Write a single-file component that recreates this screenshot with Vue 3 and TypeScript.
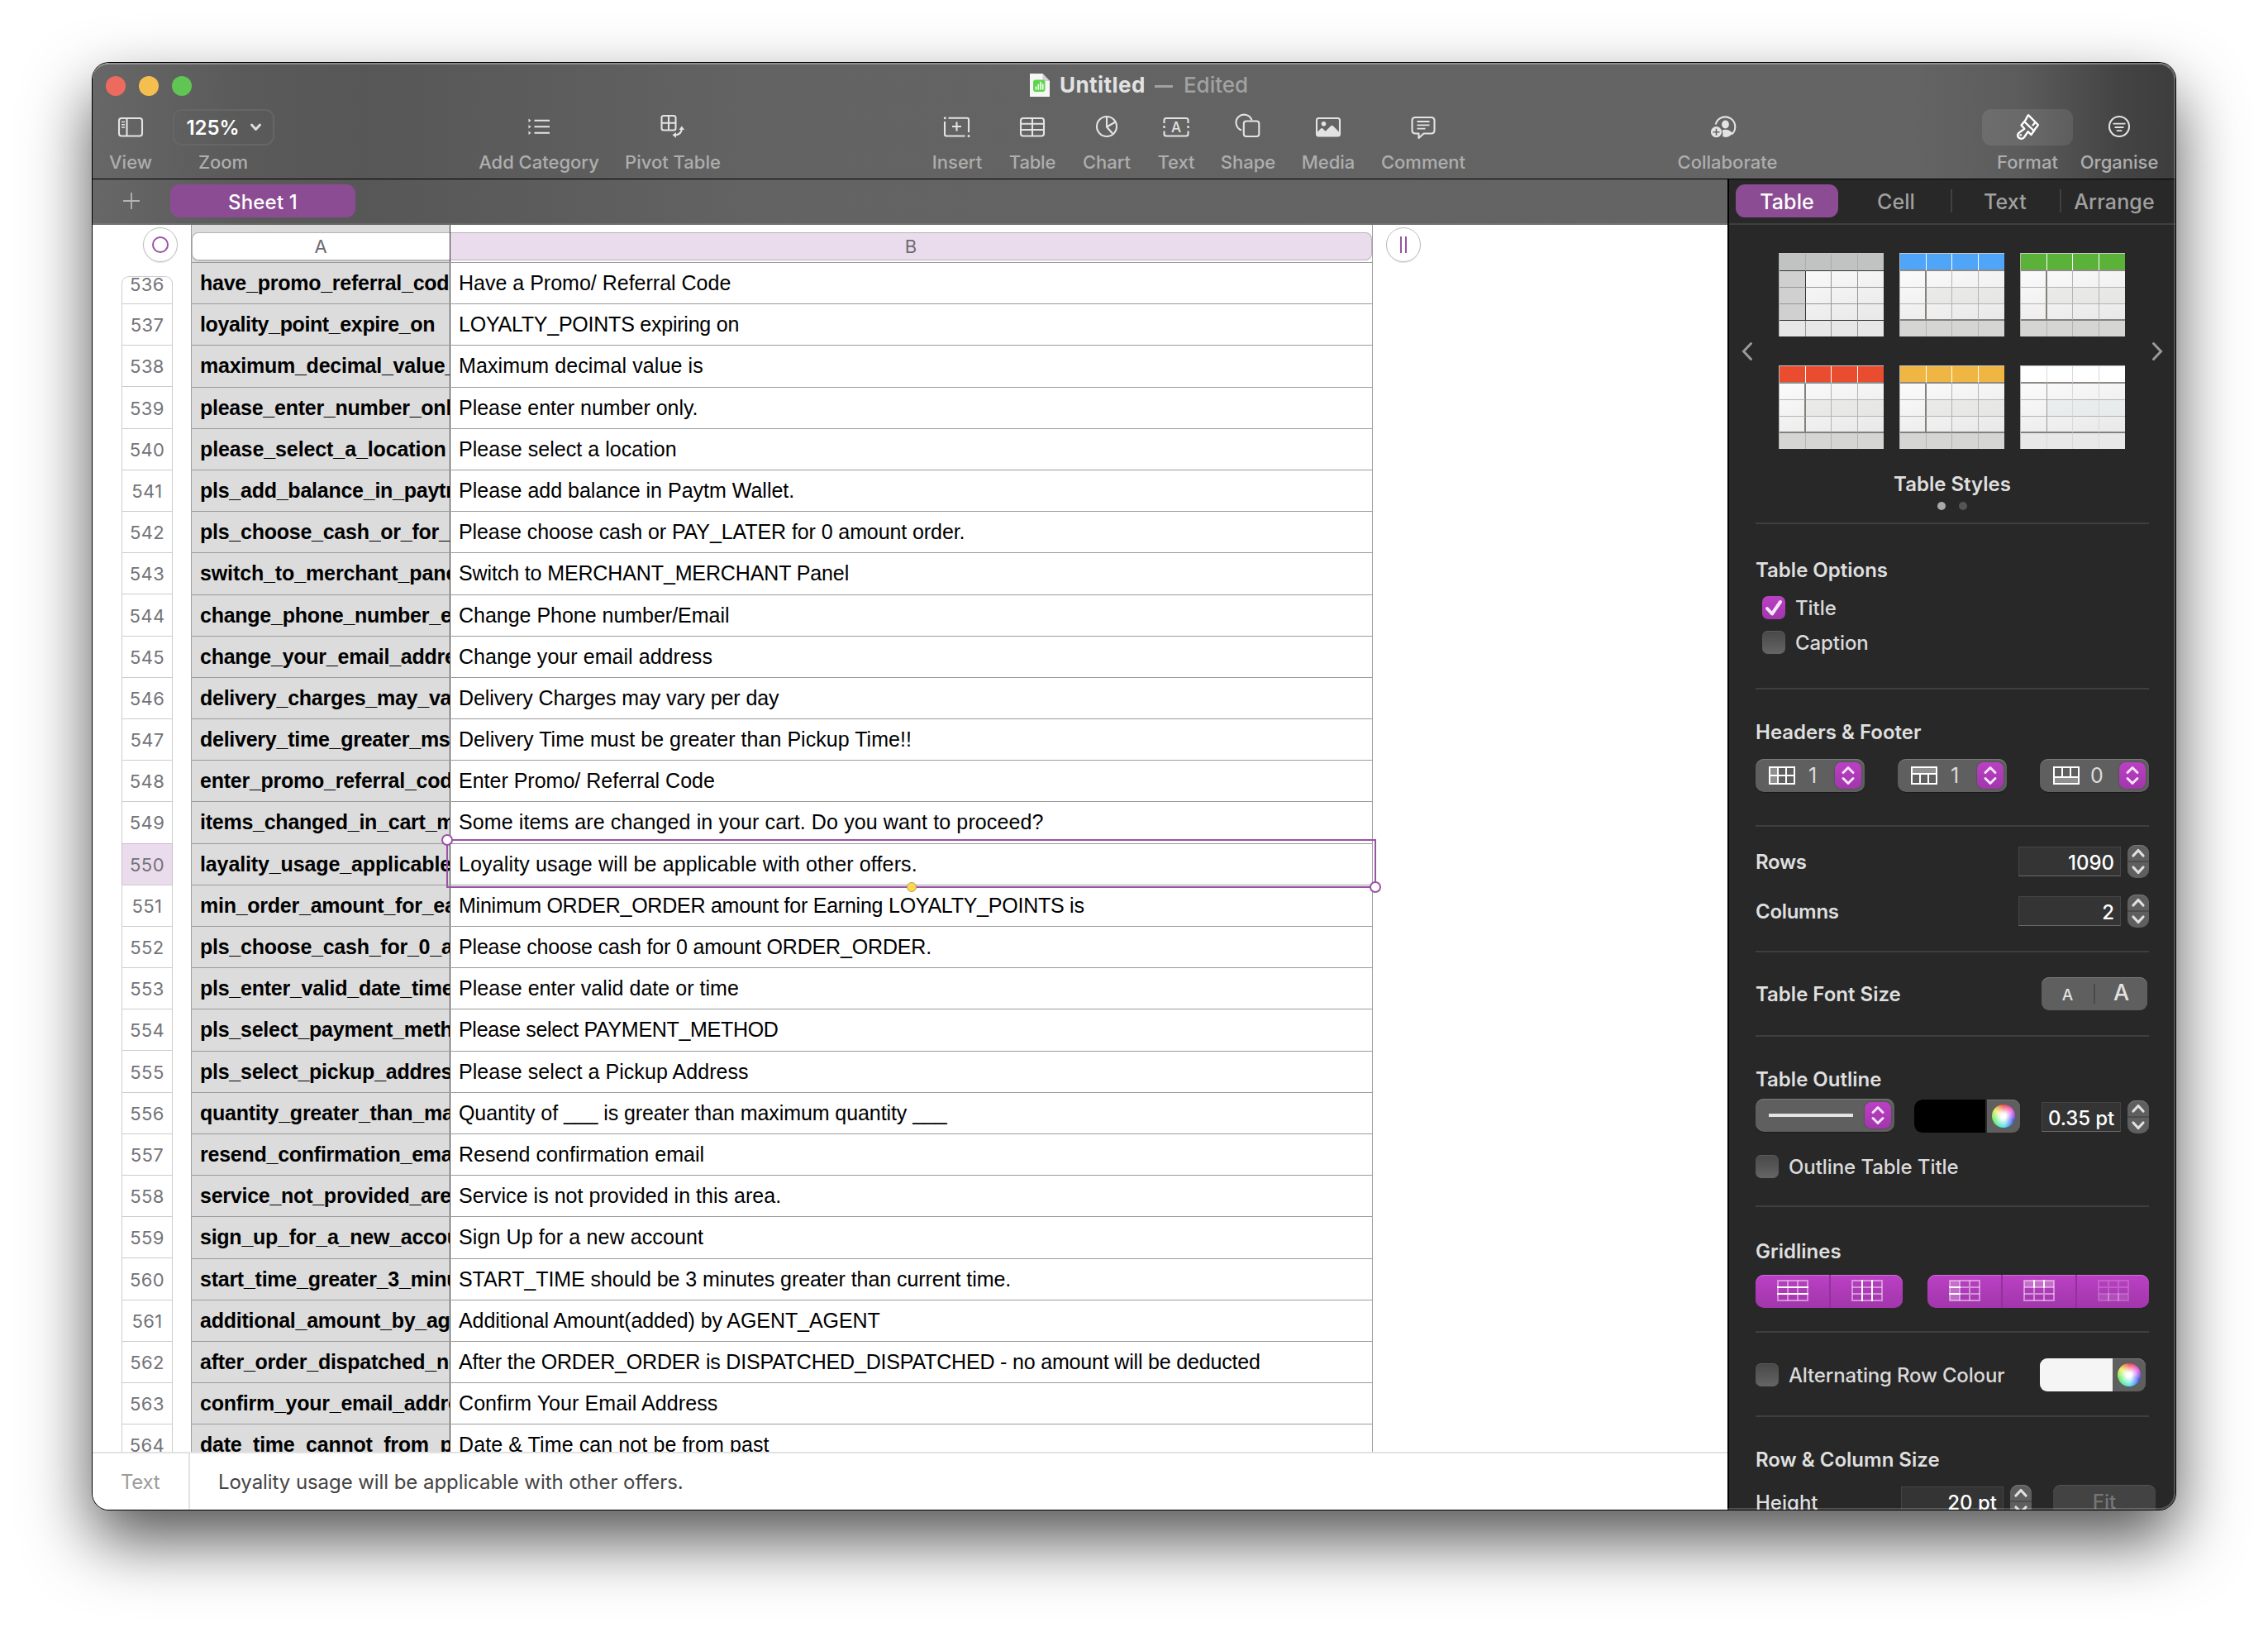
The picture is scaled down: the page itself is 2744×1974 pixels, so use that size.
<script setup lang="ts">
interface Row { n: number; key: string; text: string; ls: number; kls?: number }

const rows: Row[] = [
  { n: 536, key: 'have_promo_referral_code', text: 'Have a Promo/ Referral Code', ls: 0 },
  { n: 537, key: 'loyality_point_expire_on', text: 'LOYALTY_POINTS expiring on', ls: -0.23, kls: -0.38 },
  { n: 538, key: 'maximum_decimal_value_is', text: 'Maximum decimal value is', ls: 0.11 },
  { n: 539, key: 'please_enter_number_only', text: 'Please enter number only.', ls: -0.02 },
  { n: 540, key: 'please_select_a_location', text: 'Please select a location', ls: 0.04, kls: -0.1 },
  { n: 541, key: 'pls_add_balance_in_paytm', text: 'Please add balance in Paytm Wallet.', ls: 0 },
  { n: 542, key: 'pls_choose_cash_or_for_0_amount', text: 'Please choose cash or PAY_LATER for 0 amount order.', ls: -0.09 },
  { n: 543, key: 'switch_to_merchant_panel', text: 'Switch to MERCHANT_MERCHANT Panel', ls: -0.12, kls: -0.12 },
  { n: 544, key: 'change_phone_number_email', text: 'Change Phone number/Email', ls: -0.02 },
  { n: 545, key: 'change_your_email_address', text: 'Change your email address', ls: 0.05 },
  { n: 546, key: 'delivery_charges_may_vary', text: 'Delivery Charges may vary per day', ls: -0.09 },
  { n: 547, key: 'delivery_time_greater_msg', text: 'Delivery Time must be greater than Pickup Time!!', ls: 0.04 },
  { n: 548, key: 'enter_promo_referral_code', text: 'Enter Promo/ Referral Code', ls: 0 },
  { n: 549, key: 'items_changed_in_cart_msg', text: 'Some items are changed in your cart. Do you want to proceed?', ls: 0.12 },
  { n: 550, key: 'layality_usage_applicable_msg', text: 'Loyality usage will be applicable with other offers.', ls: 0.15, kls: -0.12 },
  { n: 551, key: 'min_order_amount_for_earning', text: 'Minimum ORDER_ORDER amount for Earning LOYALTY_POINTS is', ls: -0.24 },
  { n: 552, key: 'pls_choose_cash_for_0_amount', text: 'Please choose cash for 0 amount ORDER_ORDER.', ls: -0.17 },
  { n: 553, key: 'pls_enter_valid_date_time', text: 'Please enter valid date or time', ls: 0.04 },
  { n: 554, key: 'pls_select_payment_method', text: 'Please select PAYMENT_METHOD', ls: -0.3 },
  { n: 555, key: 'pls_select_pickup_address', text: 'Please select a Pickup Address', ls: 0.06 },
  { n: 556, key: 'quantity_greater_than_max', text: 'Quantity of ___ is greater than maximum quantity ___', ls: -0.08 },
  { n: 557, key: 'resend_confirmation_email', text: 'Resend confirmation email', ls: 0.05 },
  { n: 558, key: 'service_not_provided_area', text: 'Service is not provided in this area.', ls: 0.03 },
  { n: 559, key: 'sign_up_for_a_new_account', text: 'Sign Up for a new account', ls: 0.11 },
  { n: 560, key: 'start_time_greater_3_minutes', text: 'START_TIME should be 3 minutes greater than current time.', ls: -0.06 },
  { n: 561, key: 'additional_amount_by_agent', text: 'Additional Amount(added) by AGENT_AGENT', ls: -0.08 },
  { n: 562, key: 'after_order_dispatched_no', text: 'After the ORDER_ORDER is DISPATCHED_DISPATCHED - no amount will be deducted', ls: -0.18 },
  { n: 563, key: 'confirm_your_email_address', text: 'Confirm Your Email Address', ls: 0.08 },
  { n: 564, key: 'date_time_cannot_from_past', text: 'Date & Time can not be from past', ls: 0.1 },
]

const styles = ['plain', 'blue', 'green', 'red', 'amber', 'white']
const cells = Array.from({ length: 20 }, (_, i) => ({
  head: i < 4,
  first: i % 4 === 0,
  alt: Math.floor(i / 4) === 2 && i % 4 > 0,
  foot: i > 15,
  last: i > 11 && i < 16,
}))
</script>

<template>
  <div class="desktop">
    <div class="window">
      <header class="toolbar">
        <div class="titlebar">
          <div class="lights"><i class="red" /><i class="yellow" /><i class="green" /></div>
          <div class="title">
            <svg width="26" height="30" viewBox="0 0 26 30">
              <path d="M1 1h15.500l8.500 9v19H1z" fill="#f6f6f6" />
              <path d="M16.500 1v7.500q0 1.500 1.500 1.500h7z" fill="#cfcfcf" />
              <rect x="5" y="8.500" width="14.500" height="14.500" rx="3" fill="#5cd64a" />
              <path d="M8.500 20v-3M11.300 20v-5.500M14 20v-8.500M16.700 20v-6" stroke="#fff" stroke-width="1.600" stroke-linecap="round" />
            </svg>
            <b>Untitled</b><em></em><span>Edited</span>
          </div>
        </div>
        <div class="tools">
          <div class="tool view">
            <svg viewBox="0 0 44 44"><rect x="8" y="11" width="28" height="21.500" rx="3" /><path d="M17.500 11v21.500" /><path d="M11 15.500h4M11 18.800h4M11 22h4" stroke-width="1.600" /></svg>
            <label>View</label>
          </div>
          <div class="tool zoom">
            <div class="zoombox">125%<svg class="chev" viewBox="0 0 16 12"><path d="M2.500 3l5 5.500 5-5.500" /></svg></div>
            <label>Zoom</label>
          </div>
          <div class="tool category">
            <svg viewBox="0 0 44 44"><path d="M16.500 13.700H35M16.500 21.300H35M16.500 28.800H35" /><path d="M9.500 11.500l3 2.200-3 2.200zM9.500 19.100l3 2.200-3 2.200zM9.500 26.600l3 2.200-3 2.200z" class="fill" /></svg>
            <label>Add Category</label>
          </div>
          <div class="tool pivot">
            <svg viewBox="0 0 44 44"><rect x="8.500" y="8" width="17" height="17.500" rx="2.500" /><path d="M17 8v17.500M8.500 16.700h17" /><path d="M32.800 23.500c0 5-2.500 7.500-8.500 8" /><path d="M29.500 25l3.300-4.500 3.300 4.500zM26 28l-4.500 3.300 4.500 3.500z" class="fill" /></svg>
            <label>Pivot Table</label>
          </div>
          <div class="tool insert">
            <svg viewBox="0 0 44 44"><path d="M11.500 10.700H34q2 0 2 2V28M31.500 32.500H9q-2 0-2-2V15" /><path d="M21.500 15.500v11M16 21h11" /><circle cx="7.300" cy="10.700" r="1.500" class="fill" /><circle cx="36" cy="32.500" r="1.500" class="fill" /></svg>
            <label>Insert</label>
          </div>
          <div class="tool table">
            <svg viewBox="0 0 44 44"><rect x="8" y="11" width="28" height="21.500" rx="3" /><path d="M22 11v21.500M8 17.800h28M8 25h28" /></svg>
            <label>Table</label>
          </div>
          <div class="tool chart">
            <svg viewBox="0 0 44 44"><circle cx="22" cy="21" r="12" /><path d="M22 9v12.500l7 8M22 21.500l10.500-6" /></svg>
            <label>Chart</label>
          </div>
          <div class="tool text">
            <svg viewBox="0 0 44 44"><path d="M7.500 17v-3.500q0-2.500 2.500-2.500H34q2.500 0 2.500 2.500V17M7.500 26.500v3.500q0 2.500 2.500 2.500H34q2.500 0 2.500-2.500v-3.500" /><circle cx="7.500" cy="21.600" r="1.500" class="fill" /><circle cx="36.500" cy="21.600" r="1.500" class="fill" /><text x="22" y="27.500" text-anchor="middle">A</text></svg>
            <label>Text</label>
          </div>
          <div class="tool shape">
            <svg viewBox="0 0 44 44"><path d="M14 25.500a9.700 9.700 0 1 1 12.500-12" /><rect x="16.800" y="14.500" width="18.500" height="18.500" rx="3" /></svg>
            <label>Shape</label>
          </div>
          <div class="tool media">
            <svg viewBox="0 0 44 44"><rect x="8" y="11" width="28" height="21.500" rx="2.500" /><circle cx="16.500" cy="17.700" r="2.800" class="fill" /><path d="M8 28.500l5-5q1.200-1 2.400 0l3.300 3.200 6.500-6.400q1.300-1.200 2.600 0l8.200 8.200v3l-1 1H9l-1-1z" class="fill" /></svg>
            <label>Media</label>
          </div>
          <div class="tool comment">
            <svg viewBox="0 0 44 44"><path d="M12.500 10h19q4 0 4 4v11.500q0 4-4 4h-9l-6 5.500v-5.500h-4q-4 0-4-4V14q0-4 4-4z" stroke-linejoin="round" /><path d="M14.500 15h15M14.500 19.300h15M14.500 23.700h10" stroke-width="1.800" /></svg>
            <label>Comment</label>
          </div>
          <div class="tool collab">
            <svg viewBox="0 0 44 44"><path d="M7.700 18.500a12 12 0 1 1 19.500 12" /><ellipse cx="19.500" cy="18.500" rx="4.400" ry="5" class="fill" /><path d="M16 33q1-2.500-.5-7.500 7-2.500 13 3.500-4 5-9 5z" class="fill" /><circle cx="8.500" cy="27.700" r="6.600" class="fill" /><path d="M8.500 23.700v8M4.500 27.700h8" stroke="#656565" stroke-width="1.600" /></svg>
            <label>Collaborate</label>
          </div>
          <div class="tool format">
            <div class="formatbox">
              <svg viewBox="0 0 44 44"><path d="M23 7.200L34.800 19c-1.300 3-3.500 4-4.800 7l-3.600 5-3.800-3.800-4.800 7c-3 3.500-8.500.5-7.500-3.700.6-2 5-4.200 8-6.700L14.500 19.500l3.500-4.200c2.500-2 2.500-5 5-8.100z" stroke-linejoin="round" /><path d="M18 14.800L30 26.500M31.500 16l-3.500 4" /><circle cx="13.800" cy="31.300" r="1.500" class="fill" /></svg>
            </div>
            <label>Format</label>
          </div>
          <div class="tool organise">
            <svg viewBox="0 0 44 44"><circle cx="22" cy="21" r="12" /><path d="M14.500 17.700h15M16.500 22h11M18.700 26.200h6.600" stroke-width="1.800" /></svg>
            <label>Organise</label>
          </div>
        </div>
      </header>

      <div class="body">
        <main class="main">
          <nav class="sheets">
            <svg width="20" height="20" viewBox="0 0 20 20"><path d="M10 0v20M0 10h20" stroke="#b4b4b4" stroke-width="1.800" /></svg>
            <div class="sheet">Sheet 1</div>
          </nav>
          <div class="canvas">
            <div class="gutter">
              <div class="corner"><i /></div>
              <div class="nums">
                <div v-for="r in rows" :key="r.n" class="num" :class="{ on: r.n === 550 }">{{ r.n }}</div>
              </div>
            </div>
            <div class="grid">
              <div class="heads">
                <div class="ha"><div class="letter">A</div></div>
                <div class="hb"><div class="letter">B</div></div>
              </div>
              <div v-for="r in rows" :key="r.n" class="row">
                <div class="a" :style="{ letterSpacing: (r.kls ?? -0.25) + 'px' }">{{ r.key }}</div>
                <div class="b" :style="{ letterSpacing: r.ls + 'px' }">{{ r.text }}</div>
              </div>
              <div class="selection"><i class="h tl" /><i class="h br" /><i class="fillh" /></div>
            </div>
            <div class="addcol"><i /><i /></div>
          </div>
          <footer class="formula"><div class="kind">Text</div><div class="value">Loyality usage will be applicable with other offers.</div></footer>
        </main>

        <aside class="inspector">
          <div class="tabs"><div class="tab on">Table</div><div class="tab">Cell</div><div class="tab sep">Text</div><div class="tab sep">Arrange</div></div>
          <section class="s-styles">
            <div class="picker">
              <svg width="14" height="24" viewBox="0 0 14 24"><path d="M11.500 2.500L2.500 12l9 9.500" /></svg>
              <div class="thumbs">
                <div v-for="s in styles" :key="s" class="thumb" :class="s">
                  <i v-for="(c, i) in cells" :key="i" :class="c" />
                </div>
              </div>
              <svg width="14" height="24" viewBox="0 0 14 24"><path d="M2.500 2.500l9 9.500-9 9.500" /></svg>
            </div>
            <h4>Table Styles</h4>
            <div class="dots"><i /><i /></div>
          </section>
          <section class="s-options">
            <h4>Table Options</h4>
            <div class="check in"><span class="cb on"><svg viewBox="0 0 28 28"><path d="M6 15l6 6.500L22 7" /></svg></span>Title</div>
            <div class="check in"><span class="cb" />Caption</div>
          </section>
          <section class="s-headers">
            <h4>Headers &amp; Footer</h4>
            <div class="line">
              <div class="popup">
                <svg class="ti" viewBox="0 0 32 22"><path d="M1 1h10v20H1z" fill="#8f8f8f" stroke="none" /><rect x="1" y="1" width="30" height="20" /><path d="M11 1v20M21 1v20M1 11h30" /></svg>
                <span>1</span><b class="ud"><svg viewBox="0 0 32 32"><path d="M10 12.500l6-6 6 6M10 19.500l6 6 6-6" /></svg></b>
              </div>
              <div class="popup">
                <svg class="ti" viewBox="0 0 32 22"><path d="M1 1h30v8H1z" fill="#8f8f8f" stroke="none" /><rect x="1" y="1" width="30" height="20" /><path d="M11 9v12M21 9v12M1 9h30" /></svg>
                <span>1</span><b class="ud"><svg viewBox="0 0 32 32"><path d="M10 12.500l6-6 6 6M10 19.500l6 6 6-6" /></svg></b>
              </div>
              <div class="popup">
                <svg class="ti" viewBox="0 0 32 22"><path d="M1 13h30v8H1z" fill="#8f8f8f" stroke="none" /><rect x="1" y="1" width="30" height="20" /><path d="M11 1v12M21 1v12M1 13h30" /></svg>
                <span>0</span><b class="ud"><svg viewBox="0 0 32 32"><path d="M10 12.500l6-6 6 6M10 19.500l6 6 6-6" /></svg></b>
              </div>
            </div>
          </section>
          <section class="s-size">
            <div class="line mid"><h4>Rows</h4><div class="field">1090</div><div class="stepper"><svg viewBox="0 0 26 40"><path d="M0 20h26" class="cut" /><path d="M7 13l6-6.500 6 6.500M7 27l6 6.500 6-6.500" /></svg></div></div>
            <div class="line mid"><h4>Columns</h4><div class="field">2</div><div class="stepper"><svg viewBox="0 0 26 40"><path d="M0 20h26" class="cut" /><path d="M7 13l6-6.500 6 6.500M7 27l6 6.500 6-6.500" /></svg></div></div>
          </section>
          <section class="s-font">
            <div class="line mid"><h4>Table Font Size</h4><div class="fontbtn"><span class="sm">A</span><i /><span class="lg">A</span></div></div>
          </section>
          <section class="s-outline">
            <h4>Table Outline</h4>
            <div class="line">
              <div class="popup wide"><em /><b class="ud"><svg viewBox="0 0 32 32"><path d="M10 12.500l6-6 6 6M10 19.500l6 6 6-6" /></svg></b></div>
              <div class="well dark"><i /><b><u /></b></div>
              <div class="field short">0.35 pt</div>
              <div class="stepper"><svg viewBox="0 0 26 40"><path d="M0 20h26" class="cut" /><path d="M7 13l6-6.500 6 6.500M7 27l6 6.500 6-6.500" /></svg></div>
            </div>
            <div class="check"><span class="cb" />Outline Table Title</div>
          </section>
          <section class="s-grid">
            <h4>Gridlines</h4>
            <div class="line">
              <div class="seg">
                <span><svg viewBox="0 0 38 26"><g class="dim"><rect x="1" y="1" width="36" height="24" /><path d="M13 1v24M25 1v24" /></g><path d="M0 9h38M0 17h38" /></svg></span>
                <span><svg viewBox="0 0 38 26"><g class="dim"><rect x="1" y="1" width="36" height="24" /><path d="M1 9h36M1 17h36" /></g><path d="M13 0v26M25 0v26" /></svg></span>
              </div>
              <div class="seg">
                <span><svg viewBox="0 0 38 26"><path d="M1 1h12v24H1z" class="tint" /><g class="dim"><rect x="1" y="1" width="36" height="24" /><path d="M13 1v24M25 1v24M13 9h24M13 17h24" /></g><path d="M0 9h14M0 17h14" /></svg></span>
                <span><svg viewBox="0 0 38 26"><path d="M1 1h36v8H1z" class="tint" /><g class="dim"><rect x="1" y="1" width="36" height="24" /><path d="M13 9v16M25 9v16M1 9h36M1 17h36" /></g><path d="M13 0v10M25 0v10" /></svg></span>
                <span class="off"><svg viewBox="0 0 38 26"><path d="M1 17h36v8H1z" class="tint" /><g class="dim"><rect x="1" y="1" width="36" height="24" /><path d="M13 1v16M25 1v16M1 9h36M1 17h36" /></g><path d="M13 16v10M25 16v10" /></svg></span>
              </div>
            </div>
          </section>
          <section class="s-alt">
            <div class="line mid"><div class="check tight"><span class="cb" />Alternating Row Colour</div><div class="well light"><i /><b><u /></b></div></div>
          </section>
          <section class="s-rc">
            <h4>Row &amp; Column Size</h4>
            <div class="line">
              <div class="hl">Height</div><div class="field">20 pt</div>
              <div class="stepper"><svg viewBox="0 0 26 40"><path d="M0 20h26" class="cut" /><path d="M7 13l6-6.500 6 6.500M7 27l6 6.500 6-6.500" /></svg></div>
              <div class="fit">Fit</div>
            </div>
          </section>
        </aside>
      </div>
      <div class="rim" />
    </div>
  </div>
</template>

<style>
body { background: #fff; }
</style>

<style scoped>
* { box-sizing: border-box; }
.desktop { width: 2744px; height: 1974px; padding: 76px 112px 0; overflow: hidden; font-family: Inter, "Noto Sans", sans-serif; font-size: 24px; }
.window { position: relative; width: 2520px; height: 1750px; border-radius: 20px; background: linear-gradient(90deg, #676767 0, #5a5a5a 180px, #575757 330px, #5c5c5c 540px, #636363 800px, #646464 2200px, #5c5c5c 2330px, #444 2450px, #3d3d3d 2520px); box-shadow: 0 0 0 1px #000, 0 36px 80px rgba(0, 0, 0, .68); display: flex; flex-direction: column; }
.rim { position: absolute; inset: 0; border-radius: 20px; border-top: 2px solid rgba(255, 255, 255, .3); border-right: 2px solid rgba(255, 255, 255, .2); border-bottom: 2px solid rgba(255, 255, 255, .2); pointer-events: none; }
.toolbar { height: 141px; flex: none; border-bottom: 1px solid #000; }
.titlebar { height: 56px; display: flex; align-items: center; position: relative; }
.lights { display: flex; gap: 16px; padding-left: 16px; width: 1133px; }
.lights i { width: 24px; height: 24px; border-radius: 50%; }
.lights .red { background: #ed6a5e; }
.lights .yellow { background: #f5bf4f; }
.lights .green { background: #61c554; }
.title { display: flex; align-items: center; font-size: 26px; color: #a2a2a2; font-weight: 500; margin-top: -3px; }
.title svg { margin-right: 11px; }
.title b { color: #e2e2e2; font-weight: 700; letter-spacing: .45px; }
.title em { width: 22px; height: 3px; background: #a2a2a2; margin: 3px 13px 0 11px; }
.tools { display: flex; }
.tool { display: flex; flex-direction: column; align-items: center; flex: none; height: 84px; }
.tool svg { width: 44px; height: 44px; fill: none; stroke: #e3e3e3; stroke-width: 2.100; }
.tool svg .fill { fill: #e3e3e3; stroke: none; }
.tool svg text { fill: #e3e3e3; stroke: none; font: 500 17px Inter, sans-serif; }
.tool label { font-size: 22px; font-weight: 500; color: #aeaeae; line-height: 30px; margin-top: 5px; white-space: nowrap; }
.view { width: 92px; }
.zoom { width: 132px; }
.zoombox { width: 123px; height: 44px; border: 2px solid #666; border-radius: 11px; display: flex; align-items: center; padding-left: 15px; color: #fff; font-weight: 600; font-size: 24px; letter-spacing: -.1px; }
.tool svg.chev { width: 16px; height: 12px; margin-left: 13px; stroke: #dcdcdc; stroke-width: 3; stroke-linecap: round; stroke-linejoin: round; }
.category { width: 148px; margin-left: 242px; }
.pivot { width: 120px; margin-left: 28px; }
.insert { width: 64px; margin-left: 252px; }
.table { width: 58px; margin-left: 30px; letter-spacing: -.2px; }
.chart { width: 62px; margin-left: 30px; }
.text { width: 46px; margin-left: 30px; }
.shape { width: 70px; margin-left: 29px; }
.media { width: 66px; margin-left: 29px; }
.comment { width: 104px; margin-left: 30px; }
.collab { width: 124px; margin-left: 254px; }
.format { width: 110px; margin-left: 246px; }
.formatbox { width: 110px; height: 44px; border-radius: 11px; background: rgba(255, 255, 255, .09); display: flex; justify-content: center; }
.format svg { stroke: #fff; stroke-width: 2.400; }
.organise { width: 98px; margin-left: 7px; }

.body { display: flex; flex: 1; min-height: 0; }
.main { width: 1978px; display: flex; flex-direction: column; }
.sheets { height: 55px; flex: none; display: flex; align-items: center; padding: 0 0 1px 37px; border-bottom: 2px solid rgba(255, 255, 255, .1); }
.sheet { margin-left: 37px; width: 224px; height: 40px; padding-top: 2px; border-radius: 11px; background: #8b4c93; color: #fff; font-weight: 500; font-size: 24px; letter-spacing: .2px; display: flex; align-items: center; justify-content: center; }
.canvas { flex: 1; min-height: 0; background: #fff; overflow: hidden; display: flex; }
.gutter { width: 119px; flex: none; display: flex; flex-direction: column; }
.corner { width: 42px; height: 42px; border-radius: 50%; border: 1.500px solid #bdbdbd; margin: 3px 0 0 61px; display: flex; align-items: center; justify-content: center; flex: none; box-shadow: 0 1px 1px rgba(0, 0, 0, .12); }
.corner i { width: 20px; height: 20px; border: 2.500px solid #9a52a5; border-radius: 50%; }
.nums { margin: 0 0 0 35px; width: 62px; }
.num { height: 50.190px; border: 1px solid #ccc; border-bottom: none; display: flex; align-items: center; justify-content: center; font-size: 22px; letter-spacing: .4px; color: #737378; padding-top: 1px; }
.num:first-child { margin-top: 17px; height: 33.100px; border-radius: 9px 9px 0 0; padding: 0 0 15px; }
.num.on { background: #eadcec; border-color: #cdb9d0; }
.grid { width: 1430px; flex: none; position: relative; border-left: 1px solid #a0a0a0; border-right: 1px solid #a0a0a0; }
.heads { height: 45px; display: flex; }
.ha { width: 313px; background: #dcdcdc; padding-top: 9px; border-right: 1px solid #333; }
.hb { flex: 1; padding-top: 9px; }
.letter { height: 34px; border: 1px solid #b4b4b4; display: flex; align-items: center; justify-content: center; font-size: 22px; color: #6c6c70; }
.ha .letter { background: #fff; border-radius: 8px 0 0 8px; border-right: 0; box-shadow: 0 1px 0 #bbb; padding-right: 1px; }
.hb .letter { background: #eadcec; border-radius: 0 8px 8px 0; border-left: 0; }
.row { display: flex; height: 50.190px; border-top: 1px solid #9b9b9b; font: 25px/49px "Liberation Sans", Arial, sans-serif; color: #000; white-space: nowrap; }
.a { width: 313px; flex: none; background: #dcdcdc; border-right: 1px solid #333; padding-left: 10px; overflow: hidden; font-weight: 700; }
.b { padding-left: 10px; }
.selection { position: absolute; left: 308px; top: 743px; width: 1125px; height: 59px; border: 2px solid #9a52a5; }
.h { position: absolute; width: 14px; height: 14px; border: 2px solid #9a52a5; border-radius: 50%; background: #fff; }
.tl { left: -8px; top: -8px; }
.br { right: -8px; bottom: -8px; }
.fillh { position: absolute; left: 555px; bottom: -7px; width: 12px; height: 12px; border-radius: 50%; background: #fbd84f; border: 1px solid #b59a58; }
.addcol { width: 42px; height: 42px; border-radius: 50%; border: 1.500px solid #bdbdbd; margin: 3px 0 0 16px; display: flex; gap: 4px; align-items: center; justify-content: center; box-shadow: 0 1px 1px rgba(0, 0, 0, .12); }
.addcol i { width: 2px; height: 20px; background: #9a52a5; }
.formula { height: 70px; flex: none; background: #fff; border-top: 2px solid #e2e2e2; display: flex; align-items: center; border-radius: 0 0 0 20px; }
.kind { width: 118px; height: 68px; border-right: 2px solid #e2e2e2; color: #9c9c9c; line-height: 70px; padding-left: 34px; letter-spacing: -.3px; }
.value { padding-left: 34px; color: #444; line-height: 70px; height: 68px; letter-spacing: -.07px; }

.inspector { width: 542px; border-left: 2px solid #000; background: #282828; border-radius: 0 0 20px 0; overflow: hidden; color: #dfdfdf; height: 1609px; }
.tabs { height: 55px; border-bottom: 2px solid #3f3f3f; display: flex; align-items: center; padding: 0 0 1px 8px; }
.tab { width: 132px; height: 40px; padding-top: 2px; display: flex; align-items: center; justify-content: center; font-size: 25px; font-weight: 500; color: #a0a0a0; letter-spacing: .1px; position: relative; }
.tab.on { width: 124px; margin-right: 4px; border-radius: 11px; background: #8b4c93; color: #fff; }
.tab.sep::before { content: ''; position: absolute; left: 0; top: 6px; width: 2px; height: 28px; background: #414141; }
section { margin: 0 32px; width: 476px; border-bottom: 2px solid #3f3f3f; }
h4 { margin: 0; font-size: 24px; font-weight: 600; line-height: 32px; height: 30px; color: #dfdfdf; white-space: nowrap; }
.line { display: flex; justify-content: space-between; }
.mid { align-items: center; justify-content: flex-start; }
.mid h4 { margin-right: auto; }
.s-styles { height: 362px; padding-top: 34px; text-align: center; }
.picker { display: flex; align-items: center; justify-content: space-between; margin: 0 -17px; height: 237px; }
.picker svg { fill: none; stroke: #9a9a9a; stroke-width: 3; stroke-linecap: round; }
.thumbs { display: grid; grid-template-columns: repeat(3, 127px); gap: 35px 19px; margin-right: 2px; }
.thumb { height: 101px; display: grid; grid-template-columns: 32px 31px 32px 32px; grid-template-rows: 21px 20px 20px 20px 20px; border-top: 1px solid #c6c8c6; border-left: 1px solid #b5b5b5; overflow: hidden; background: linear-gradient(165deg, #fff, #e4e4e4); }
.thumb i { border-right: 1px solid #b4b4b4; border-bottom: 1px solid #b4b4b4; }
.thumb .head { border-right-color: #fff; border-bottom: 2px solid #8f8a86; background: var(--h); }
.thumb .first:not(.head):not(.foot) { border-right: 2px solid #85807c; }
.thumb .last { border-bottom: 2px solid #85807c; }
.thumb .alt { background: rgba(224, 224, 221, .5); }
.thumb .foot { background: #d5d5d4; }
.blue { --h: #4fa5f7; }
.green.thumb { --h: #5bb238; }
.red.thumb { --h: #ea4c30; }
.amber { --h: #f0b644; }
.white { --h: #fff; }
.white.thumb i { border-right-color: #d9d9d9; }
.white.thumb .alt { background: rgba(228, 234, 233, .6); }
.white.thumb .foot { background: #e8e8e8; }
.white.thumb .first:not(.head):not(.foot) { border-right: 1px solid #999; }
.plain { --h: #c0c3c1; }
.plain.thumb i { border-color: #979797; }
.plain.thumb .head { border-right-color: #adadad; border-bottom: 1px solid #333; }
.plain.thumb .first:not(.head):not(.foot) { border-right: 1px solid #333; background: #d0d0d0; }
.plain.thumb .last { border-bottom: 1px solid #333 !important; }
.plain.thumb .alt { background: none; }
.plain.thumb .foot { background: #e7e7e7; }
.s-styles h4 { margin-top: 27px; }
.dots { display: flex; gap: 16px; justify-content: center; margin-top: 7px; }
.dots i { width: 10px; height: 10px; border-radius: 50%; background: #a9a9a9; }
.dots i + i { background: #555; }
.s-options { height: 200px; padding-top: 40px; }
.s-options h4 { margin-bottom: 10px; }
.check { height: 42px; display: flex; align-items: center; font-weight: 500; color: #dadada; white-space: nowrap; letter-spacing: -.08px; }
.check.tight { letter-spacing: -.17px; }
.check.in { padding-left: 8px; }
.cb { width: 28px; height: 28px; border-radius: 7px; margin-right: 12px; background: linear-gradient(#484848, #656565); box-shadow: inset 0 1px 0 #5c5c5c; }
.cb.on { background: linear-gradient(#bb40c4, #a136ab); box-shadow: none; }
.cb svg { display: block; fill: none; stroke: #f7e6f8; stroke-width: 4; stroke-linecap: round; stroke-linejoin: round; }
.s-headers { height: 166px; padding-top: 36px; }
.s-headers .line { margin-top: 18px; }
.popup { width: 132px; height: 40px; border-radius: 10px; background: #5f5f5f; box-shadow: inset 0 1px 0 #7a7a7a, 0 1px 1px #1a1a1a; display: flex; align-items: center; padding-left: 16px; }
.ti { width: 32px; height: 22px; fill: none; stroke: #fff; stroke-width: 2; }
.popup span { width: 42px; text-align: center; font-size: 25px; color: #dcdcdc; margin-right: 6px; }
.ud { width: 32px; height: 32px; border-radius: 8px; background: linear-gradient(#bb40c4, #a136ab); box-shadow: 0 0 2px rgba(0, 0, 0, .4); }
.ud svg { display: block; fill: none; stroke: #f6e3f7; stroke-width: 3; stroke-linecap: round; stroke-linejoin: round; }
.s-size { height: 152px; padding-top: 22px; }
.s-size .line + .line { margin-top: 20px; }
.s-size h4 { letter-spacing: -.3px; }
.field { width: 124px; height: 36px; background: #343434; border: 1px solid #454545; border-bottom: 1.500px solid #6a6a6a; color: #fff; font-weight: 500; text-align: right; padding-right: 7px; line-height: 38px; white-space: nowrap; }
.stepper { width: 26px; height: 40px; border-radius: 10px; background: #5f5f5f; box-shadow: inset 0 1px 0 #7a7a7a; margin-left: 8px; flex: none; overflow: hidden; }
.stepper svg { display: block; fill: none; stroke: #e0e0e0; stroke-width: 3.200; stroke-linecap: round; stroke-linejoin: round; }
.stepper .cut { stroke: #4c4c4c; stroke-width: 2; }
.s-font { height: 102px; padding-top: 30px; }
.fontbtn { width: 128px; height: 40px; border-radius: 9px; background: #5f5f5f; box-shadow: inset 0 1px 0 #7a7a7a; margin-right: 2px; display: flex; align-items: center; color: #e2e2e2; font-weight: 500; }
.fontbtn i { width: 2px; height: 24px; background: #4a4a4a; }
.fontbtn span { width: 64px; text-align: center; }
.fontbtn .sm { font-size: 19px; padding-top: 2px; }
.fontbtn .lg { font-size: 27px; margin-top: -3px; }
.s-outline { height: 206px; padding-top: 36px; }
.s-outline .line { margin-top: 9px; justify-content: flex-start; }
.s-outline .stepper { margin-top: 2px; }
.popup.wide { width: 168px; }
.popup.wide em { width: 102px; height: 4px; background: #e4e4e4; margin-right: 14px; }
.well { width: 128px; height: 40px; border-radius: 9px; display: flex; overflow: hidden; background: #5f5f5f; box-shadow: inset 0 1px 0 #777; }
.well i { width: 88px; }
.well b { flex: 1; display: flex; align-items: center; justify-content: center; }
.well u { width: 28px; height: 28px; border-radius: 50%; background: radial-gradient(circle, #fff 15%, rgba(255, 255, 255, 0) 72%), conic-gradient(#f03c3c, #e64ae0 60deg, #3b4bf0 115deg, #4ae0f0 175deg, #5ceb5c 250deg, #e8ec4c 305deg, #f03c3c); }
.well.dark { margin: 1px 0 0 24px; }
.well.dark i { background: #000; border-right: 2px solid #2a2a2a; }
.well.light { margin-left: auto; margin-right: 4px; }
.well.light i { background: #f5f5f5; }
.field.short { width: 96px; margin: 4px 0 0 26px; letter-spacing: -.1px; }
.s-outline .check { margin-top: 19px; }
.s-grid { height: 152px; padding-top: 38px; }
.s-grid .line { margin-top: 14px; }
.seg { height: 40px; border-radius: 10px; background: linear-gradient(#bb40c4, #a136ab); box-shadow: inset 0 1px 0 #cf6fd6; display: flex; }
.seg span { width: 91px; padding: 6px 0 0 26px; border-right: 2px solid #93319c; }
.seg span + span { width: 90px; padding-left: 25px; }
.seg span:last-child { border: 0; width: 87px; padding-left: 25px; }
.seg svg { display: block; width: 38px; height: 26px; fill: none; stroke: #fff; stroke-width: 2; }
.seg .dim { stroke: rgba(255, 255, 255, .45); }
.seg .tint { fill: rgba(255, 255, 255, .25); stroke: none; }
.seg .off svg { opacity: .4; }
.s-alt { height: 102px; padding-top: 30px; }
.s-rc { height: 200px; padding-top: 36px; border: 0; }
.s-rc .line { margin: 16px -8px 0 0; justify-content: flex-start; }
.hl { width: 176px; font-weight: 500; line-height: 44px; }
.s-rc .field { margin-top: 2px; }
.fit { width: 124px; height: 40px; border-radius: 9px; background: #434343; box-shadow: inset 0 1px 0 #535353; color: #757575; text-align: center; line-height: 42px; margin-left: 26px; font-weight: 500; }
</style>
